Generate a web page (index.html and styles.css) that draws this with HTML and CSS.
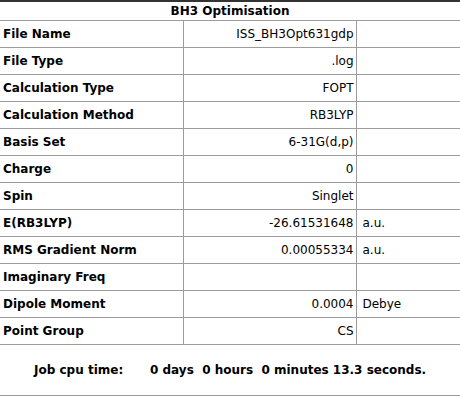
FILE: index.html
```html
<!DOCTYPE html>
<html>
<head>
<meta charset="utf-8">
<link rel="stylesheet" href="styles.css">
</head>
<body>
<div class="panel">
<table class="props">
  <colgroup><col class="c1"><col class="c2"><col class="c3"></colgroup>
  <tr class="title"><th colspan="3">BH3 Optimisation</th></tr>
  <tr><td class="lbl">File Name</td><td class="val">ISS_BH3Opt631gdp</td><td class="unit"></td></tr>
  <tr><td class="lbl">File Type</td><td class="val">.log</td><td class="unit"></td></tr>
  <tr><td class="lbl">Calculation Type</td><td class="val">FOPT</td><td class="unit"></td></tr>
  <tr><td class="lbl">Calculation Method</td><td class="val">RB3LYP</td><td class="unit"></td></tr>
  <tr><td class="lbl">Basis Set</td><td class="val">6-31G(d,p)</td><td class="unit"></td></tr>
  <tr><td class="lbl">Charge</td><td class="val">0</td><td class="unit"></td></tr>
  <tr><td class="lbl">Spin</td><td class="val">Singlet</td><td class="unit"></td></tr>
  <tr><td class="lbl">E(RB3LYP)</td><td class="val">-26.61531648</td><td class="unit">a.u.</td></tr>
  <tr><td class="lbl">RMS Gradient Norm</td><td class="val">0.00055334</td><td class="unit">a.u.</td></tr>
  <tr><td class="lbl">Imaginary Freq</td><td class="val"></td><td class="unit"></td></tr>
  <tr><td class="lbl">Dipole Moment</td><td class="val">0.0004</td><td class="unit">Debye</td></tr>
  <tr><td class="lbl">Point Group</td><td class="val">CS</td><td class="unit"></td></tr>
</table>
<div class="footer">
  <span class="flabel">Job cpu time:</span>
  <span class="ftime">0 days&nbsp; 0 hours&nbsp; 0 minutes 13.3 seconds.</span>
</div>
</div>
</body>
</html>
```
FILE: styles.css
```css
html, body {
  margin: 0;
  padding: 0;
  background: #fff;
}
body {
  font-family: "DejaVu Sans", "Liberation Sans", sans-serif;
  font-size: 12px;
  color: #000;
}
.panel {
  width: 460px;
}
.props {
  width: 460px;
  border-collapse: collapse;
  table-layout: fixed;
  border-top: 2px solid #333;
}
.c1 { width: 183px; }
.c2 { width: 173px; }
.c3 { width: 104px; }
.props th {
  height: 18px;
  padding: 0;
  font-weight: bold;
  text-align: center;
  border-bottom: 1px solid #9c9c9c;
  vertical-align: middle;
  line-height: 18px;
}
.props td {
  height: 26px;
  padding: 0;
  border-bottom: 1px solid #9c9c9c;
  vertical-align: middle;
  white-space: nowrap;
  overflow: hidden;
}
.props td.lbl {
  font-weight: bold;
  padding-left: 3px;
  border-right: 1px solid #9c9c9c;
}
.props td.val {
  text-align: right;
  padding-right: 2px;
  border-right: 1px solid #9c9c9c;
}
.props td.unit {
  padding-left: 6px;
}
.footer {
  height: 50px;
  border-bottom: 1px solid #9c9c9c;
  display: flex;
  align-items: center;
  padding-left: 34px;
  font-weight: bold;
  white-space: pre;
}
.flabel {
  width: 116px;
}
```
